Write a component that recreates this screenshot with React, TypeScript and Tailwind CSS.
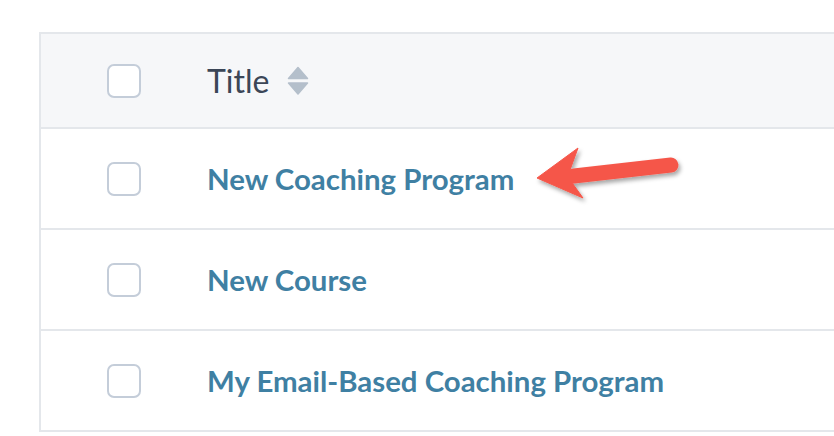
import React from "react";

const rows = ["New Coaching Program", "New Course", "My Email-Based Coaching Program"];

function Checkbox() {
  return <span className="block h-[34px] w-[34px] rounded-[7px] border-2 border-[#c4cdd9] bg-white" />;
}

function SortIcon() {
  return (
    <svg width="22" height="30" viewBox="0 0 22 30" className="ml-[18px]">
      <path d="M11 1.5 L20.5 12.5 L1.5 12.5 Z" fill="#b4bfcb" stroke="#b4bfcb" strokeWidth="1.5" strokeLinejoin="round" />
      <path d="M1.5 17 L20.5 17 L11 28 Z" fill="#b4bfcb" stroke="#b4bfcb" strokeWidth="1.5" strokeLinejoin="round" />
    </svg>
  );
}

function Arrow() {
  return (
    <svg className="pointer-events-none absolute left-[528px] top-[140px]" width="170" height="72" viewBox="0 0 170 72">
      <defs>
        <filter id="sh" x="-20%" y="-30%" width="140%" height="170%">
          <feDropShadow dx="2" dy="3" stdDeviation="2" floodColor="#000" floodOpacity="0.35" />
        </filter>
      </defs>
      <g filter="url(#sh)">
        <line x1="46" y1="36" x2="143" y2="25" stroke="#f5574a" strokeWidth="15" strokeLinecap="round" />
        <path d="M9 38 L50 8 L42 30 L45 44 L55 58 Z" fill="#f5574a" stroke="#f5574a" strokeWidth="1" strokeLinejoin="round" />
      </g>
    </svg>
  );
}

export default function App() {
  return (
    <div className="relative h-[436px] w-[834px] overflow-hidden bg-white pl-[39px] pt-8" style={{ fontFamily: "Lato, 'Noto Sans', sans-serif" }}>
      <div className="border-l-2 border-t-2 border-[#e4e7eb]">
        <div className="flex h-[95px] items-center border-b-2 border-[#e4e7eb] bg-[#f6f7f9]">
          <div className="w-[66px]" />
          <Checkbox />
          <div className="w-[66px]" />
          <span className="text-[32px] leading-none text-[#3b4657]">Title</span>
          <SortIcon />
        </div>
        {rows.map((r) => (
          <div key={r} className="flex h-[101px] items-center border-b-2 border-[#e4e7eb]">
            <div className="w-[66px]" />
            <Checkbox />
            <div className="w-[66px]" />
            <a className="text-[29.4px] font-bold leading-none text-[#3f80a3]">{r}</a>
          </div>
        ))}
      </div>
      <Arrow />
    </div>
  );
}
